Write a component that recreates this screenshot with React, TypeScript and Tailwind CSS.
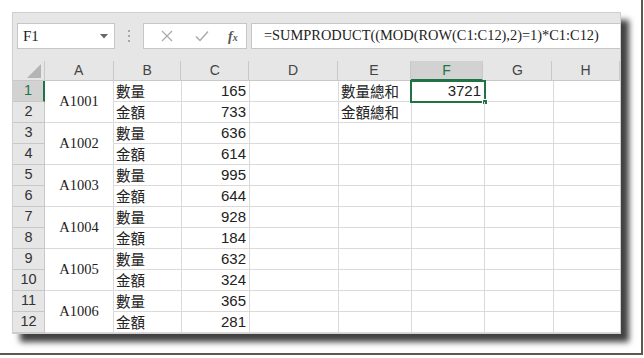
import React from 'react';

const COLS = [
  {key: 'A', w: 69},
  {key: 'B', w: 68},
  {key: 'C', w: 68},
  {key: 'D', w: 89},
  {key: 'E', w: 73},
  {key: 'F', w: 73},
  {key: 'G', w: 69},
  {key: 'H', w: 68}
];

const DATA = [
  {id: 'A1001', qty: 165, amt: 733},
  {id: 'A1002', qty: 636, amt: 614},
  {id: 'A1003', qty: 995, amt: 644},
  {id: 'A1004', qty: 928, amt: 184},
  {id: 'A1005', qty: 632, amt: 324},
  {id: 'A1006', qty: 365, amt: 281}
];

const SANS = "font-['Liberation_Sans','Noto_Sans_CJK_TC',sans-serif]";
const CJK = "font-['Noto_Sans_CJK_TC',sans-serif]";
const SERIF = "font-['Liberation_Serif','Noto_Sans_CJK_TC',serif]";

function Toolbar() {
  return (
    <div className="flex h-[48px] items-start bg-[#e6e6e6] pl-[4px] pt-[10px]">
      <div className="flex h-[26px] w-[98px] items-center justify-between border border-[#c6c6c6] bg-white pl-[5px] pr-[6px]">
        <span className={`${SERIF} text-[15px] text-[#222]`}>F1</span>
        <svg width="8" height="5" viewBox="0 0 8 5">
          <path d="M0 0 H8 L4 4.5 Z" fill="#666" />
        </svg>
      </div>
      <div className="flex w-[28px] flex-col items-center gap-[3px] pt-[7px]">
        <span className="h-[2px] w-[2px] bg-[#a6a6a6]" />
        <span className="h-[2px] w-[2px] bg-[#a6a6a6]" />
        <span className="h-[2px] w-[2px] bg-[#a6a6a6]" />
      </div>
      <div className="flex h-[26px] w-[104px] items-center border border-[#c6c6c6] bg-white">
        <svg width="12" height="12" viewBox="0 0 12 12" className="ml-[17px]">
          <path d="M1 1 L11 11 M11 1 L1 11" stroke="#aaa" strokeWidth="1.3" />
        </svg>
        <svg width="14" height="12" viewBox="0 0 14 12" className="ml-[22px]">
          <path d="M1 6.5 L5 10.5 L13 1.5" stroke="#aaa" strokeWidth="1.5" fill="none" />
        </svg>
        <span className="ml-[19px] font-['Liberation_Serif',serif] text-[14px] font-bold italic text-[#555]">
          f<span className="text-[10px]">x</span>
        </span>
      </div>
      <div className="ml-[4px] flex h-[26px] flex-1 items-center border-y border-l border-[#c6c6c6] bg-white pl-[12px]">
        <span className={`${SERIF} whitespace-nowrap text-[14.4px] text-[#222]`}>
          =SUMPRODUCT((MOD(ROW(C1:C12),2)=1)*C1:C12)
        </span>
      </div>
    </div>
  );
}

function HeaderRow() {
  return (
    <div className="flex h-[20px] bg-[#e6e6e6]">
      <div className="relative w-[32px] border-r border-b border-[#c8c8c8]">
        <svg width="14" height="14" viewBox="0 0 14 14" className="absolute right-[3px] bottom-[2px]">
          <path d="M14 0 V14 H0 Z" fill="#b4b4b4" />
        </svg>
      </div>
      {COLS.map((c) => (
        <div
          key={c.key}
          style={{width: c.w}}
          className={`flex items-center justify-center border-r text-[14px] ${SANS} ${
            c.key === 'F'
              ? 'border-b-2 border-r-[#c8c8c8] border-b-[#217346] bg-[#d2d2d2] text-[#217346]'
              : 'border-b border-[#c8c8c8] text-[#444]'
          }`}
        >
          {c.key}
        </div>
      ))}
    </div>
  );
}

function Grid() {
  const rows = Array.from({length: 12}, (_, i) => i);
  return (
    <div className="grid grid-cols-[32px_69px_68px_68px_89px_73px_73px_69px_68px] grid-rows-[repeat(12,21px)]">
      {rows.map((i) => {
        const rec = DATA[Math.floor(i / 2)];
        const odd = i % 2 === 0;
        const r = i + 1;
        return (
          <React.Fragment key={i}>
            <div
              style={{gridRow: r, gridColumn: 1}}
              className={`flex items-center justify-center border-b border-[#c8c8c8] text-[14.5px] ${SANS} ${
                r === 1
                  ? 'border-r-2 border-r-[#217346] bg-[#d2d2d2] text-[#217346]'
                  : 'border-r border-[#c8c8c8] bg-[#e6e6e6] text-[#333]'
              }`}
            >
              {r}
            </div>
            {odd && (
              <div
                style={{gridRow: `${r} / span 2`, gridColumn: 2}}
                className={`flex items-center justify-center border-r border-b border-[#dadada] pt-[1px] text-[14.5px] text-[#222] ${SERIF}`}
              >
                {rec.id}
              </div>
            )}
            <div
              style={{gridRow: r, gridColumn: 3}}
              className={`flex items-center overflow-hidden border-r border-b border-[#dadada] pl-[2px] text-[14.5px] leading-none text-[#222] ${CJK}`}
            >
              {odd ? '數量' : '金額'}
            </div>
            <div
              style={{gridRow: r, gridColumn: 4}}
              className={`flex items-center justify-end border-r border-b border-[#dadada] pr-[3px] text-[15px] text-[#222] ${SANS}`}
            >
              {odd ? rec.qty : rec.amt}
            </div>
            <div style={{gridRow: r, gridColumn: 5}} className="border-r border-b border-[#dadada]" />
            <div
              style={{gridRow: r, gridColumn: 6}}
              className={`flex items-center overflow-hidden border-r border-b border-[#dadada] pl-[2px] text-[14.5px] leading-none text-[#222] ${CJK}`}
            >
              {r === 1 ? '數量總和' : r === 2 ? '金額總和' : ''}
            </div>
            <div
              style={{gridRow: r, gridColumn: 7}}
              className={`relative flex items-center justify-end border-r border-b border-[#dadada] pr-[3px] text-[15px] text-[#222] ${SANS}`}
            >
              {r === 1 && (
                <>
                  3721
                  <div className="absolute -top-[1px] -left-[2px] h-[23px] w-[76px] border-2 border-[#217346]" />
                  <div className="absolute -right-[4px] -bottom-[4px] h-[6px] w-[6px] border border-white bg-[#217346]" />
                </>
              )}
            </div>
            <div style={{gridRow: r, gridColumn: 8}} className="border-r border-b border-[#dadada]" />
            <div style={{gridRow: r, gridColumn: 9}} className="border-b border-[#dadada]" />
          </React.Fragment>
        );
      })}
    </div>
  );
}

export default function App() {
  return (
    <div className="relative h-[358px] w-[644px] overflow-hidden bg-white">
      <div className="h-[355px] w-[643px] border-r-2 border-b-2 border-[#5a5a4e] bg-white pl-[12px] pt-[12px]">
        <div className="w-[609px] overflow-hidden border border-[#cfcfcf] bg-white shadow-[8px_8px_6px_rgba(0,0,0,0.75)]">
          <Toolbar />
          <HeaderRow />
          <Grid />
        </div>
      </div>
    </div>
  );
}
